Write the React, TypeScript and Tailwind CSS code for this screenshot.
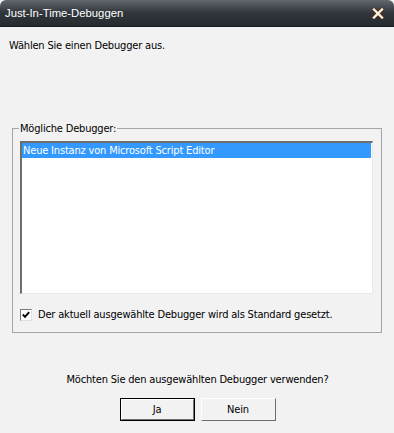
import React from "react";

export default function App() {
  const font = { fontFamily: "Tahoma, 'DejaVu Sans Condensed', 'Liberation Sans', sans-serif" };
  return (
    <div className="w-[394px] h-[433px] bg-[#f2f2f2] flex flex-col text-[11px] leading-[13px] tracking-[-0.18px] text-black overflow-hidden" style={font}>
      <div className="h-[27px] shrink-0 flex items-center justify-between pl-[5px] pr-[10px] rounded-t-[6px] bg-gradient-to-b from-[#62676d] via-[#30363b] to-[#262b30] border-b border-[#1a1d20]">
        <span className="text-white text-[11.3px] leading-[15px] tracking-normal" style={{ fontFamily: "'Liberation Sans', Arial, sans-serif" }}>Just-In-Time-Debuggen</span>
        <svg width="12" height="11" viewBox="0 0 12 11">
          <path d="M2 1.5 L10 9.5 M10 1.5 L2 9.5" stroke="#4a2a18" strokeWidth="4.2" strokeLinecap="square" />
          <path d="M2 1.5 L10 9.5 M10 1.5 L2 9.5" stroke="#fff4e2" strokeWidth="2.4" strokeLinecap="square" />
        </svg>
      </div>
      <div className="pl-[9px] pt-[12px]">Wählen Sie einen Debugger aus.</div>
      <fieldset className="mx-[12px] mt-[70px] border border-[#a5a5a5] h-[211px] px-[7px] pb-0 flex flex-col">
        <legend className="ml-[-1px] px-[1px]">Mögliche Debugger:</legend>
        <div className="mt-[6px] mr-[1px] h-[153px] bg-white border-t-2 border-l-2 border-t-[#6e6e6e] border-l-[#6e6e6e] border-b border-r border-b-[#e8e8e8] border-r-[#e8e8e8] pr-[1px]">
          <div className="h-[15px] bg-[#3399ff] text-white pl-[1px] leading-[15px]">Neue Instanz von Microsoft Script Editor</div>
        </div>
        <div className="flex items-center mt-[14px]">
          <div className="w-[12px] h-[12px] bg-white border border-t-[#7a7a7a] border-l-[#7a7a7a] border-b-[#e0e0e0] border-r-[#e0e0e0] flex items-center justify-center">
            <svg width="8" height="8" viewBox="0 0 8 8">
              <path d="M0.8 3.5 L3 5.8 L7.2 1.2" stroke="#000" strokeWidth="1.9" fill="none" />
            </svg>
          </div>
          <span className="ml-[6px]">Der aktuell ausgewählte Debugger wird als Standard gesetzt.</span>
        </div>
      </fieldset>
      <div className="text-center mt-[40px] pl-[1px]">Möchten Sie den ausgewählten Debugger verwenden?</div>
      <div className="flex justify-center gap-[6px] mt-[12px] pl-[1px]">
        <button className="w-[75px] h-[23px] border border-black bg-[#f2f2f2] flex p-0">
          <div className="flex-1 flex items-center justify-center border border-t-white border-l-white border-b-[#6e6e6e] border-r-[#6e6e6e]">Ja</div>
        </button>
        <button className="w-[75px] h-[23px] bg-[#f2f2f2] border border-t-white border-l-white border-b-[#6e6e6e] border-r-[#6e6e6e] flex items-center justify-center p-0">
          Nein
        </button>
      </div>
    </div>
  );
}
